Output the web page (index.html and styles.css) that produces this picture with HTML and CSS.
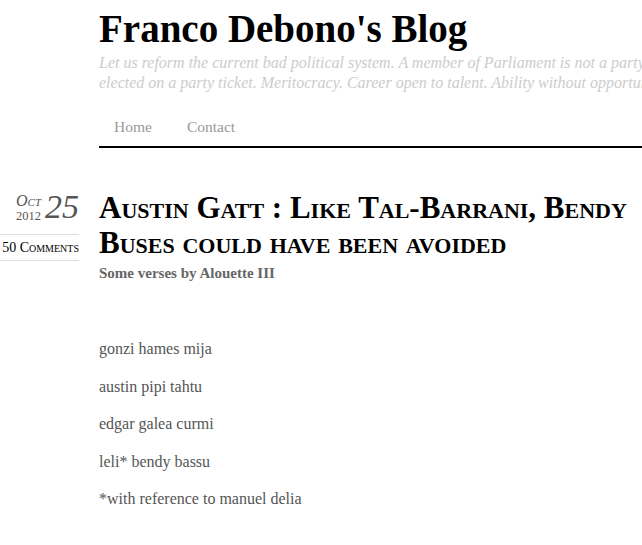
FILE: index.html
```html
<!DOCTYPE html>
<html>
<head>
<meta charset="utf-8">
<link rel="stylesheet" href="styles.css">
</head>
<body>
<div class="page">
  <header class="site-header">
    <h1 class="site-title">Franco Debono's Blog</h1>
    <p class="tagline">Let us reform the current bad political system. A member of Parliament is not a party hack<br>elected on a party ticket. Meritocracy. Career open to talent. Ability without opportunity is nothing.</p>
    <nav class="menu">
      <a href="#">Home</a>
      <a href="#">Contact</a>
    </nav>
  </header>
  <article class="post">
    <aside class="meta">
      <div class="date">
        <div class="month-year">
          <span class="month">Oct</span>
          <span class="year">2012</span>
        </div>
        <span class="day">25</span>
      </div>
      <div class="comments">50 Comments</div>
    </aside>
    <div class="entry">
      <h2 class="entry-title">Austin Gatt : Like Tal-Barrani, Bendy Buses could have been avoided</h2>
      <p class="subtitle">Some verses by Alouette III</p>
      <div class="content">
        <p>gonzi hames mija</p>
        <p>austin pipi tahtu</p>
        <p>edgar galea curmi</p>
        <p>leli* bendy bassu</p>
        <p>*with reference to manuel delia</p>
      </div>
    </div>
  </article>
</div>
</body>
</html>
```
FILE: styles.css
```css
html, body {
  margin: 0;
  padding: 0;
  background: #fff;
  overflow: hidden;
}
body {
  font-family: "Liberation Serif", "Times New Roman", serif;
  color: #555;
}
.page {
  width: 900px;
}
.site-header {
  margin-left: 99px;
  padding-top: 8px;
}
.site-title {
  margin: 0;
  font-size: 39px;
  line-height: 42px;
  font-weight: bold;
  color: #000;
}
.tagline {
  margin: 3px 0 0;
  font-style: italic;
  font-size: 16px;
  line-height: 20px;
  color: #ccc;
  white-space: nowrap;
}
.menu {
  display: flex;
  gap: 35px;
  padding: 0 0 0 15px;
  margin-top: 25px;
  height: 28px;
  border-bottom: 2px solid #000;
  font-size: 15.5px;
  line-height: 18px;
}
.menu a {
  color: #999;
  text-decoration: none;
}
.post {
  display: flex;
  margin-top: 42px;
}
.meta {
  width: 79px;
  flex-shrink: 0;
  margin-right: 20px;
}
.date {
  display: flex;
  justify-content: flex-end;
  align-items: center;
  gap: 4px;
  padding-bottom: 10px;
  border-bottom: 1px solid #ddd;
  color: #555;
}
.month-year {
  display: flex;
  flex-direction: column;
  align-items: flex-end;
  gap: 1px;
  font-style: italic;
  padding-top: 2px;
}
.month {
  font-variant: small-caps;
  font-size: 16px;
  line-height: 16px;
}
.year {
  font-style: normal;
  font-size: 12.5px;
  line-height: 13px;
}
.day {
  font-style: italic;
  font-size: 34px;
  line-height: 34px;
}
.comments {
  font-variant: small-caps;
  font-size: 14px;
  line-height: 25px;
  color: #000;
  text-align: right;
  border-bottom: 1px solid #ddd;
  white-space: nowrap;
}
.entry {
  flex: 1;
  width: 543px;
  max-width: 543px;
}
.entry-title {
  margin: 0;
  font-size: 31px;
  line-height: 35px;
  font-variant: small-caps;
  font-weight: bold;
  color: #000;
}
.subtitle {
  margin: 3px 0 0;
  font-weight: bold;
  font-size: 15px;
  line-height: 20px;
  color: #666;
}
.content {
  margin-top: 55px;
  font-size: 16px;
  line-height: 21px;
}
.content p {
  margin: 0 0 16.5px;
}
```
